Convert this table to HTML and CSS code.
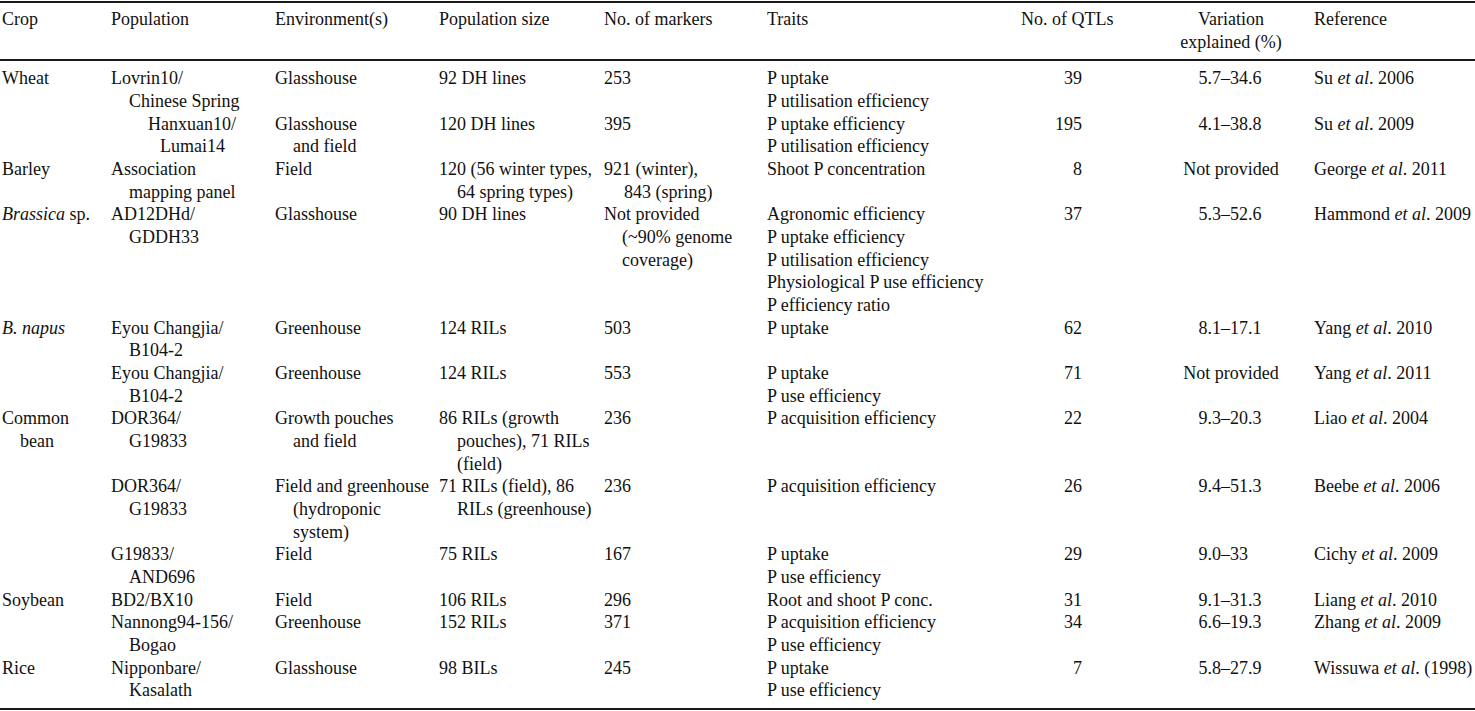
FILE: index.html
```html
<!DOCTYPE html>
<html lang="en">
<head>
<meta charset="utf-8">
<title>QTL studies</title>
<link rel="stylesheet" href="styles.css">
</head>
<body>
<div class="wrap">
<table class="qtl">
<colgroup>
<col class="c-crop"><col class="c-pop"><col class="c-env"><col class="c-size"><col class="c-mark"><col class="c-trait"><col class="c-qtl"><col class="c-var"><col class="c-ref">
</colgroup>
<thead>
<tr>
<th>Crop</th>
<th>Population</th>
<th>Environment(s)</th>
<th>Population size</th>
<th>No. of markers</th>
<th>Traits</th>
<th class="h-qtl">No. of QTLs</th>
<th class="h-var">Variation<br>explained (%)</th>
<th>Reference</th>
</tr>
</thead>
<tbody>
<tr class="first">
<td>Wheat</td>
<td class="hang">Lovrin10/<br>Chinese Spring</td>
<td>Glasshouse</td>
<td>92 DH lines</td>
<td>253</td>
<td><div>P uptake</div><div>P utilisation efficiency</div></td>
<td class="num">39</td>
<td class="var"><span>5.7–34.6</span></td>
<td>Su <i>et al</i>. 2006</td>
</tr>
<tr>
<td></td>
<td class="shift">Hanxuan10/<br>Lumai14</td>
<td class="hang">Glasshouse<br>and field</td>
<td>120 DH lines</td>
<td>395</td>
<td><div>P uptake efficiency</div><div>P utilisation efficiency</div></td>
<td class="num">195</td>
<td class="var"><span>4.1–38.8</span></td>
<td>Su <i>et al</i>. 2009</td>
</tr>
<tr>
<td>Barley</td>
<td class="hang">Association<br>mapping panel</td>
<td>Field</td>
<td class="hang">120 (56 winter types,<br>64 spring types)</td>
<td class="hang wide">921 (winter),<br>843 (spring)</td>
<td><div>Shoot P concentration</div></td>
<td class="num">8</td>
<td class="var"><span>Not provided</span></td>
<td>George <i>et al</i>. 2011</td>
</tr>
<tr>
<td><i>Brassica</i> sp.</td>
<td class="hang">AD12DHd/<br>GDDH33</td>
<td>Glasshouse</td>
<td>90 DH lines</td>
<td class="hang">Not provided<br>(~90% genome<br>coverage)</td>
<td><div>Agronomic efficiency</div><div>P uptake efficiency</div><div>P utilisation efficiency</div><div>Physiological P use efficiency</div><div>P efficiency ratio</div></td>
<td class="num">37</td>
<td class="var"><span>5.3–52.6</span></td>
<td>Hammond <i>et al</i>. 2009</td>
</tr>
<tr>
<td><i>B. napus</i></td>
<td class="hang">Eyou Changjia/<br>B104-2</td>
<td>Greenhouse</td>
<td>124 RILs</td>
<td>503</td>
<td><div>P uptake</div></td>
<td class="num">62</td>
<td class="var"><span>8.1–17.1</span></td>
<td>Yang <i>et al</i>. 2010</td>
</tr>
<tr>
<td></td>
<td class="hang">Eyou Changjia/<br>B104-2</td>
<td>Greenhouse</td>
<td>124 RILs</td>
<td>553</td>
<td><div>P uptake</div><div>P use efficiency</div></td>
<td class="num">71</td>
<td class="var"><span>Not provided</span></td>
<td>Yang <i>et al</i>. 2011</td>
</tr>
<tr>
<td class="hang">Common<br>bean</td>
<td class="hang">DOR364/<br>G19833</td>
<td class="hang">Growth pouches<br>and field</td>
<td class="hang">86 RILs (growth<br>pouches), 71 RILs<br>(field)</td>
<td>236</td>
<td><div>P acquisition efficiency</div></td>
<td class="num">22</td>
<td class="var"><span>9.3–20.3</span></td>
<td>Liao <i>et al</i>. 2004</td>
</tr>
<tr>
<td></td>
<td class="hang">DOR364/<br>G19833</td>
<td class="hang">Field and greenhouse<br>(hydroponic<br>system)</td>
<td class="hang">71 RILs (field), 86<br>RILs (greenhouse)</td>
<td>236</td>
<td><div>P acquisition efficiency</div></td>
<td class="num">26</td>
<td class="var"><span>9.4–51.3</span></td>
<td>Beebe <i>et al</i>. 2006</td>
</tr>
<tr>
<td></td>
<td class="hang">G19833/<br>AND696</td>
<td>Field</td>
<td>75 RILs</td>
<td>167</td>
<td><div>P uptake</div><div>P use efficiency</div></td>
<td class="num">29</td>
<td class="var"><span>9.0–33</span></td>
<td>Cichy <i>et al</i>. 2009</td>
</tr>
<tr>
<td>Soybean</td>
<td>BD2/BX10</td>
<td>Field</td>
<td>106 RILs</td>
<td>296</td>
<td><div>Root and shoot P conc.</div></td>
<td class="num">31</td>
<td class="var"><span>9.1–31.3</span></td>
<td>Liang <i>et al</i>. 2010</td>
</tr>
<tr>
<td></td>
<td class="hang">Nannong94-156/<br>Bogao</td>
<td>Greenhouse</td>
<td>152 RILs</td>
<td>371</td>
<td><div>P acquisition efficiency</div><div>P use efficiency</div></td>
<td class="num">34</td>
<td class="var"><span>6.6–19.3</span></td>
<td>Zhang <i>et al</i>. 2009</td>
</tr>
<tr class="last">
<td>Rice</td>
<td class="hang">Nipponbare/<br>Kasalath</td>
<td>Glasshouse</td>
<td>98 BILs</td>
<td>245</td>
<td><div>P uptake</div><div>P use efficiency</div></td>
<td class="num">7</td>
<td class="var"><span>5.8–27.9</span></td>
<td>Wissuwa <i>et al</i>. (1998)</td>
</tr>
</tbody>
</table>
</div>
</body>
</html>
```

FILE: styles.css
```css
html, body {
  margin: 0;
  padding: 0;
  background: #ffffff;
}

.wrap {
  padding-top: 1px;
  width: 1475px;
}

.qtl {
  width: 1475px;
  table-layout: fixed;
  border-collapse: collapse;
  font-family: "Liberation Serif", "Times New Roman", serif;
  font-size: 18px;
  line-height: 22.67px;
  color: #111111;
  border-top: 2px solid #1a1a1a;
  border-bottom: 2px solid #1a1a1a;
}

.c-crop { width: 109px; }
.c-pop { width: 164px; }
.c-env { width: 164px; }
.c-size { width: 165px; }
.c-mark { width: 163px; }
.c-trait { width: 245px; }
.c-qtl { width: 140px; }
.c-var { width: 162px; }
.c-ref { width: 163px; }

.qtl th,
.qtl td {
  padding: 0 0 0 2px;
  text-align: left;
  vertical-align: top;
  white-space: nowrap;
  font-weight: normal;
}

.qtl thead th {
  padding-top: 5px;
  padding-bottom: 6px;
  border-bottom: 2px solid #1a1a1a;
}

.qtl thead th.h-qtl {
  padding-left: 11px;
}

.qtl thead th.h-var {
  text-align: center;
  padding-left: 0;
}

.qtl tr.first td {
  padding-top: 6px;
}

.qtl tr.last td {
  padding-bottom: 6px;
}

.qtl td.hang {
  padding-left: 20px;
  text-indent: -18px;
}

.qtl td.hang.wide {
  padding-left: 22px;
  text-indent: -20px;
}

.qtl td.shift {
  padding-left: 51px;
  text-indent: -12px;
}

.qtl td.num {
  text-align: right;
  padding-right: 68px;
}

.qtl td.var {
  text-align: center;
  padding-left: 0;
}

.qtl td.var span {
  display: inline-block;
  min-width: 65px;
  text-align: left;
}
```
